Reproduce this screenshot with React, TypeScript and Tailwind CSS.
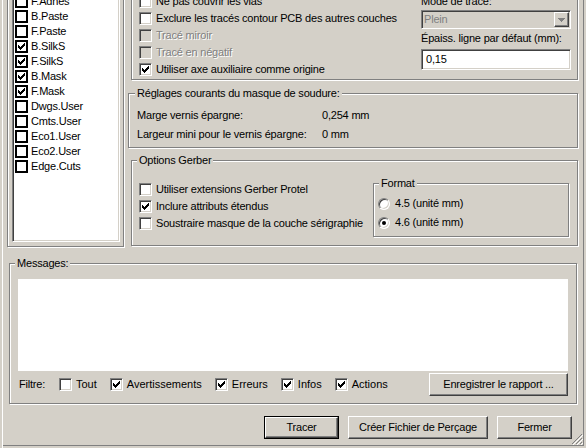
import React from 'react';

const etched = 'border border-[#808080] shadow-[inset_1px_1px_0_#fff,1px_1px_0_#fff]';
const sunken =
  'border border-t-[#808080] border-l-[#808080] border-b-white border-r-white shadow-[inset_1px_1px_0_#404040,inset_-1px_-1px_0_#d4d0c8]';
const raised =
  'border border-t-white border-l-white border-b-[#404040] border-r-[#404040] shadow-[inset_-1px_-1px_0_#808080,inset_1px_1px_0_#d4d0c8]';
const disabledText = 'text-[#808080] [text-shadow:1px_1px_0_#fff]';

function Tick() {
  return (
    <svg width="7" height="7" viewBox="0 0 7 7" shapeRendering="crispEdges" className="block">
      <rect x="6" y="0" width="1" height="1" />
      <rect x="5" y="1" width="2" height="1" />
      <rect x="0" y="2" width="1" height="1" />
      <rect x="4" y="2" width="3" height="1" />
      <rect x="0" y="3" width="2" height="1" />
      <rect x="3" y="3" width="3" height="1" />
      <rect x="0" y="4" width="5" height="1" />
      <rect x="1" y="5" width="3" height="1" />
      <rect x="2" y="6" width="1" height="1" />
    </svg>
  );
}

function CheckBox({ checked = false, disabled = false }: { checked?: boolean; disabled?: boolean }) {
  return (
    <span
      className={`flex h-[13px] w-[13px] shrink-0 items-center justify-center ${sunken} ${
        disabled ? 'bg-[#d4d0c8]' : 'bg-white'
      }`}
    >
      {checked && <Tick />}
    </span>
  );
}

function ListCheck({ checked }: { checked: boolean }) {
  return (
    <span className="flex h-[13px] w-[13px] shrink-0 items-center justify-center border-2 border-black bg-white">
      {checked && <Tick />}
    </span>
  );
}

function Radio({ checked }: { checked: boolean }) {
  return (
    <span className="flex h-[12px] w-[12px] shrink-0 items-center justify-center rounded-full border border-t-[#808080] border-l-[#808080] border-b-white border-r-white bg-white shadow-[inset_1px_1px_0_#404040,inset_-1px_-1px_0_#d4d0c8]">
      {checked && <span className="h-[4px] w-[4px] rounded-full bg-black" />}
    </span>
  );
}

function Legend({ children, left }: { children: React.ReactNode; left: string }) {
  return <span className={`absolute top-[-7px] ${left} bg-[#d4d0c8] px-[2px] leading-[13px]`}>{children}</span>;
}

function Button({ children, width, isDefault = false }: { children: React.ReactNode; width: string; isDefault?: boolean }) {
  const inner = (
    <span className={`flex h-full w-full items-center justify-center ${raised}`}>{children}</span>
  );
  return isDefault ? (
    <span className={`flex h-[23px] ${width} border border-black`}>{inner}</span>
  ) : (
    <span className={`flex h-[23px] ${width}`}>{inner}</span>
  );
}

const layers = [
  { name: 'F.Adhes', on: false },
  { name: 'B.Paste', on: false },
  { name: 'F.Paste', on: false },
  { name: 'B.SilkS', on: true },
  { name: 'F.SilkS', on: true },
  { name: 'B.Mask', on: true },
  { name: 'F.Mask', on: true },
  { name: 'Dwgs.User', on: false },
  { name: 'Cmts.User', on: false },
  { name: 'Eco1.User', on: false },
  { name: 'Eco2.User', on: false },
  { name: 'Edge.Cuts', on: false },
];

const plotOptions = [
  { label: 'Ne pas couvrir les vias', on: false, disabled: false },
  { label: 'Exclure les tracés contour PCB des autres couches', on: false, disabled: false },
  { label: 'Tracé miroir', on: false, disabled: true },
  { label: 'Tracé en négatif', on: false, disabled: true },
  { label: 'Utiliser axe auxiliaire comme origine', on: true, disabled: false },
];

const gerberOptions = [
  { label: 'Utiliser extensions Gerber Protel', on: false },
  { label: 'Inclure attributs étendus', on: true },
  { label: 'Soustraire masque de la couche sérigraphie', on: false },
];

const filters = [
  { label: 'Tout', on: false },
  { label: 'Avertissements', on: true },
  { label: 'Erreurs', on: true },
  { label: 'Infos', on: true },
  { label: 'Actions', on: true },
];

export default function App() {
  return (
    <div className="relative flex h-[448px] w-[586px] flex-col overflow-hidden bg-[#d4d0c8] text-[11px] leading-[13px] tracking-[-0.2px] text-black [font-family:'Liberation_Sans',Arial,sans-serif] shadow-[inset_2px_0_0_#d4d0c8,inset_3px_0_0_#fff,inset_-2px_-2px_0_#d4d0c8,inset_-3px_-3px_0_#808080]">
      {/* Top area: layers + options */}
      <div className="flex h-[248px] shrink-0">
        {/* Layers */}
        <div className={`ml-[7px] -mt-[20px] flex h-[267px] w-[117px] flex-col ${etched}`}>
          <div className={`mt-[5px] mb-[4px] ml-[4px] w-[108px] flex-1 bg-white pt-[7px] pl-[2px] ${sunken}`}>
            {layers.map((l) => (
              <div key={l.name} className="flex h-[15px] items-center gap-[3px]">
                <ListCheck checked={l.on} />
                <span>{l.name}</span>
              </div>
            ))}
          </div>
        </div>

        {/* Right column */}
        <div className="ml-[4px] flex w-[451px] flex-col">
          {/* Plot options */}
          <div className={`relative ml-[3px] -mt-[20px] flex h-[100px] w-[447px] ${etched}`}>
            <div className="flex-1 pt-[12px] pl-[7px]">
              {plotOptions.map((o) => (
                <div key={o.label} className="flex h-[17px] items-center gap-[4px]">
                  <CheckBox checked={o.on} disabled={o.disabled} />
                  <span className={o.disabled ? disabledText : ''}>{o.label}</span>
                </div>
              ))}
            </div>
            <div className="mr-[6px] flex w-[150px] flex-col pt-[13px]">
              <div className="h-[14px] leading-[14px]">Mode de tracé:</div>
              <div className={`mt-[2px] flex h-[19px] items-center bg-[#d4d0c8] pl-[2px] ${sunken}`}>
                <span className="flex-1 text-[#808080]">Plein</span>
                <span className={`mr-[1px] flex h-[15px] w-[15px] items-center justify-center ${raised}`}>
                  <svg width="7" height="4" viewBox="0 0 7 4" shapeRendering="crispEdges">
                    <path d="M0 0h7v1H0zM1 1h5v1H1zM2 2h3v1H2zM3 3h1v1H3z" fill="#808080" />
                  </svg>
                </span>
              </div>
              <div className="mt-[2px] h-[14px] leading-[14px]">Épaiss. ligne par défaut (mm):</div>
              <div className={`mt-[4px] flex h-[21px] items-center bg-white pl-[4px] ${sunken}`}>0,15</div>
            </div>
          </div>

          {/* Solder mask settings */}
          <div className={`relative mt-[13px] h-[55px] w-[450px] pt-[12px] pl-[8px] ${etched}`}>
            <Legend left="left-[6px]">Réglages courants du masque de soudure:</Legend>
            <div className="flex h-[19px] items-center">
              <span className="w-[185px]">Marge vernis épargne:</span>
              <span>0,254 mm</span>
            </div>
            <div className="flex h-[19px] items-center">
              <span className="w-[185px]">Largeur mini pour le vernis épargne:</span>
              <span>0 mm</span>
            </div>
          </div>

          {/* Gerber options */}
          <div className={`relative ml-[3px] mt-[12px] flex h-[86px] w-[447px] ${etched}`}>
            <Legend left="left-[5px]">Options Gerber</Legend>
            <div className="flex-1 pt-[20px] pl-[7px]">
              {gerberOptions.map((o) => (
                <div key={o.label} className="flex h-[17px] items-center gap-[4px]">
                  <CheckBox checked={o.on} />
                  <span>{o.label}</span>
                </div>
              ))}
            </div>
            <div className={`relative mt-[22px] mr-[8px] h-[54px] w-[196px] pt-[10px] pl-[4px] ${etched}`}>
              <Legend left="left-[5px]">Format</Legend>
              <div className="flex h-[19px] items-center gap-[5px]">
                <Radio checked={false} />
                <span>4.5 (unité mm)</span>
              </div>
              <div className="flex h-[19px] items-center gap-[5px]">
                <Radio checked />
                <span>4.6 (unité mm)</span>
              </div>
            </div>
          </div>
        </div>
      </div>

      {/* Messages */}
      <div className={`relative mt-[15px] ml-[9px] flex h-[141px] w-[568px] shrink-0 flex-col ${etched}`}>
        <Legend left="left-[5px]">Messages:</Legend>
        <div className="mt-[15px] ml-[8px] h-[92px] w-[550px] bg-white" />
        <div className="mt-[2px] flex h-[23px] items-center pl-[9px]">
          <span className="w-[40px]">Filtre:</span>
          <div className="flex items-center gap-[13px]">
            {filters.map((f) => (
              <div key={f.label} className="flex items-center gap-[4px]">
                <CheckBox checked={f.on} />
                <span className="tracking-[0px]">{f.label}</span>
              </div>
            ))}
          </div>
          <div className="ml-auto mr-[8px]">
            <Button width="w-[139px]">Enregistrer le rapport ...</Button>
          </div>
        </div>
      </div>

      {/* Dialog buttons */}
      <div className="mt-[12px] flex shrink-0 justify-end gap-[9px] pr-[14px]">
        <Button width="w-[75px]" isDefault>
          Tracer
        </Button>
        <Button width="w-[140px]">Créer Fichier de Perçage</Button>
        <Button width="w-[75px]">Fermer</Button>
      </div>

      {/* Resize grip */}
      <svg className="absolute right-[3px] bottom-[3px]" width="11" height="11" viewBox="0 0 11 11" shapeRendering="crispEdges">
        <path d="M10 0L0 10M10 4L4 10M10 8L8 10" stroke="#808080" strokeWidth="1.2" />
        <path d="M10.8 1L1 10.8M10.8 5L5 10.8M10.8 9L9 10.8" stroke="#fff" strokeWidth="1" />
      </svg>
    </div>
  );
}
